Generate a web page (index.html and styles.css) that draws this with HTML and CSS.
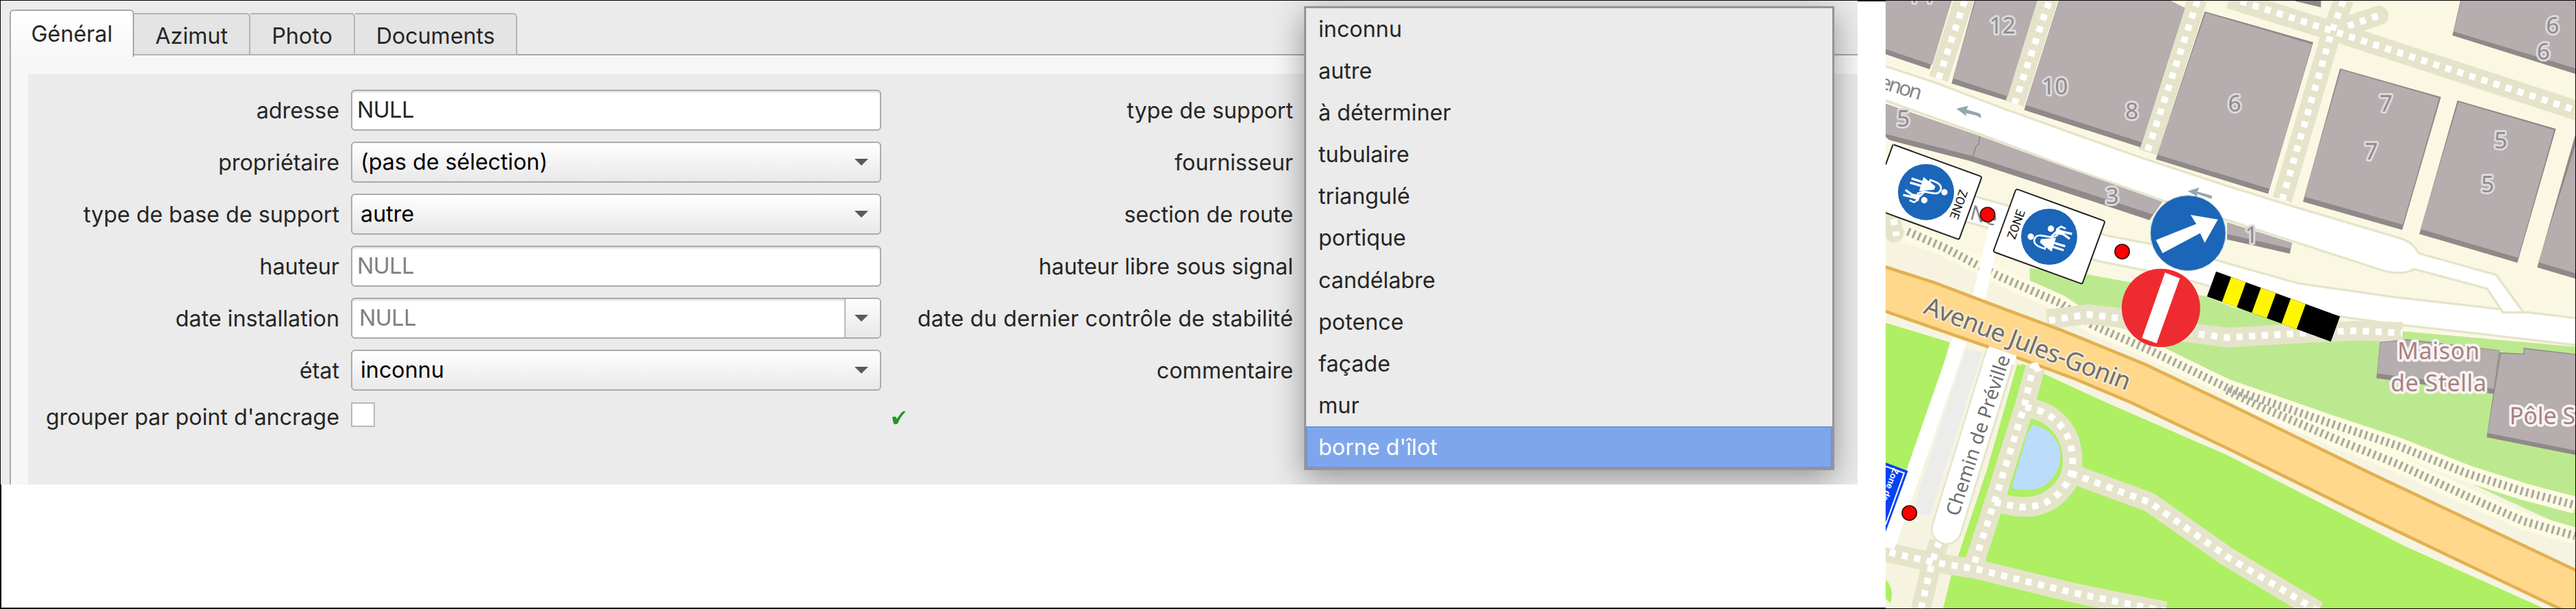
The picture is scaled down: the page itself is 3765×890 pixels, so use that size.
FILE: index.html
```html
<!DOCTYPE html>
<html lang="fr">
<head>
<meta charset="utf-8">
<title>Supports</title>
<link rel="stylesheet" href="styles.css">
</head>
<body>
<div class="page">
  <section class="panel">
    <nav class="tabs">
      <span class="tab tab-active">Général</span>
      <span class="tab tab-azimut">Azimut</span>
      <span class="tab tab-photo">Photo</span>
      <span class="tab tab-documents">Documents</span>
    </nav>
    <div class="pane">
      <div class="form">
        <label class="label">adresse</label>
        <div class="field null">NULL</div>
        <label class="label label-far">type de support</label>

        <label class="label">propriétaire</label>
        <div class="field select">(pas de sélection)<i class="caret"></i></div>
        <label class="label label-far">fournisseur</label>

        <label class="label">type de base de support</label>
        <div class="field select">autre<i class="caret"></i></div>
        <label class="label label-far">section de route</label>

        <label class="label">hauteur</label>
        <div class="field null muted">NULL</div>
        <label class="label label-far">hauteur libre sous signal</label>

        <label class="label">date installation</label>
        <div class="field null muted date">NULL<span class="date-button"><i class="caret"></i></span></div>
        <label class="label label-far label-long">date du dernier contrôle de stabilité</label>

        <label class="label">état</label>
        <div class="field select">inconnu<i class="caret"></i></div>
        <label class="label label-far">commentaire</label>

        <label class="label label-check">grouper par point d'ancrage</label>
        <div class="checkbox"></div>
        <svg class="tick" viewBox="0 0 20 19"><path d="M0 9 Q3 7 5 8 L7 11 Q12 3 16 0 L20 0 Q12 8 8 18 Q5 20 2 18 Z"/></svg>
      </div>
    </div>
    <ul class="popup">
      <li>inconnu</li>
      <li>autre</li>
      <li>à déterminer</li>
      <li>tubulaire</li>
      <li>triangulé</li>
      <li>portique</li>
      <li>candélabre</li>
      <li>potence</li>
      <li>façade</li>
      <li>mur</li>
      <li class="selected">borne d'îlot</li>
    </ul>
  </section>

  <svg class="map" viewBox="33 3 3024 2664" preserveAspectRatio="none">
    <defs>
      <g id="walkers">
        <circle cx="-27" cy="-76" r="14"/>
        <path d="M-36 -30 L-22 -30 L6 30 L-58 32 Z"/>
        <path class="limb" d="M-34 -28 L-44 0 L-56 0 Q-60 -54 -34 -57 Q-12 -58 -7 -36 L2 12 L20 34"/>
        <path class="leg" d="M-36 30 L-34 80 M-18 30 L-15 80"/>
        <circle cx="36" cy="-5" r="14"/>
        <path d="M18 18 L46 18 L46 54 L28 54 Z"/>
        <path class="limb" d="M28 20 L4 8 M42 20 L60 34 L58 56"/>
        <path class="leg" d="M33 50 L22 88 M41 50 L46 90"/>
      </g>
    </defs>

    <rect class="ground" x="33" y="3" width="3024" height="2664"/>
    <path class="verge" d="M33 1040 L440 1170 L830 1330 L1530 1600 L3057 2240 V2720 L33 1440 Z"/>
    <path class="park" d="M665 1175 L930 1205 L1440 1300 L1560 1350 L2010 1430 L2330 1455 L3057 1520 V2330 L2600 2120 L2050 1850 L1530 1660 L1000 1400 L665 1240 Z"/>
    <path class="lawn" d="M33 1415 L320 1502 L600 1580 L740 1645 L1000 1765 L1530 1995 L2310 2395 L2920 2667 H33 Z"/>
    <path class="verge" d="M320 1480 L640 1560 L470 2130 L355 2440 L320 2525 L285 2667 H33 V2375 L90 2340 Z"/>
    <path class="lawn" d="M610 1595 L660 1620 L420 2440 H350 L480 2050 Z"/>
    <path class="lawn" d="M33 2540 Q62 2570 60 2610 L55 2645 L33 2625 Z"/>

    <!-- rails -->
    <g class="rails">
      <path class="rail-bed" d="M130 1015 L300 1090 L440 1165 L540 1215 L800 1330 L940 1425 L1200 1540 L1530 1700 L1730 1768 L1980 1855 L2280 1955 L2580 2075 L2830 2155 L3057 2215"/>
      <path class="rail-bed" d="M1530 1712 L1680 1785 L2030 1935 L2280 2035 L2580 2175 L2830 2285 L3057 2350"/>
      <path class="rail" d="M130 1015 L300 1090 L440 1165 L540 1215 L800 1330 L940 1425 L1200 1540 L1530 1700 L1730 1768 L1980 1855 L2280 1955 L2580 2075 L2830 2155 L3057 2215"/>
      <path class="rail" d="M1530 1712 L1680 1785 L2030 1935 L2280 2035 L2580 2175 L2830 2285 L3057 2350"/>
    </g>

    <!-- side streets -->
    <path class="street-case" d="M400 915 L560 960 L990 1090 L1300 1150 L1530 1215 L1830 1300 L2250 1360 L2600 1400 L3070 1455"/>
    <path class="street-mid" d="M400 915 L560 960 L990 1090 L1300 1150 L1530 1215 L1830 1300 L2250 1360 L2600 1400 L3070 1455"/>
    <path class="alley" d="M515 990 L438 1320"/>
    <path class="street" d="M20 286 L250 362 L560 480 L1150 690 L1530 815 L1820 905 L2290 1045 Q2345 1060 2370 1110 L2710 1205 L2830 1370 L2740 1370 L2670 1265 L2350 1180 Q2300 1210 2210 1185 L1530 965 L1250 880 L850 740 L450 590 L20 436 Z"/>

    <!-- footpaths -->
    <g class="trail">
      <path d="M380 -10 L265 345"/><path d="M748 -10 L598 455"/><path d="M1400 -5 L1182 668"/>
      <path d="M1540 -5 L1990 135 L3070 487"/><path d="M2045 -5 L1990 135 L1772 875"/><path class="round" d="M1990 135 L2195 68"/>
      <path d="M740 1400 L920 1378 L1070 1395 L1300 1450 L1530 1480 L1880 1460 L2090 1450 L2300 1455"/>
      <path class="round" d="M50 950 L70 1020"/>
      <path d="M690 1610 L640 1785 L510 2200 L420 2475"/>
      <path d="M645 1785 Q790 1805 840 1935 Q870 2040 830 2115 Q750 2240 600 2220 L510 2202"/>
      <path d="M845 2075 L1190 2202 L1530 2440 L1930 2680"/>
      <path d="M20 2418 L240 2465 L430 2495 L860 2600 L1260 2680"/>
      <path d="M268 2375 L238 2460 L185 2680"/>
    </g>
    <g class="dots">
      <path d="M380 3 L265 345"/><path d="M748 10 L598 455"/><path d="M1400 3 L1182 660"/>
      <path d="M1590 5 L1990 135 L3070 487"/><path d="M2040 3 L1990 135 L1772 875"/><path d="M2060 114 L2200 66"/>
      <path d="M750 1405 L920 1378 L1070 1397 L1300 1450 L1530 1480 L1880 1460 L2090 1450 L2300 1460"/>
      <path d="M68 960 L80 1035"/>
      <path d="M684 1590 L640 1785 L510 2200 L420 2475"/>
      <path d="M645 1785 Q790 1805 840 1935 Q870 2040 830 2115 Q750 2240 600 2220 L510 2202"/>
      <path d="M845 2075 L1190 2202 L1530 2440 L1930 2680"/>
      <path d="M50 2422 L240 2465 L430 2495 L860 2600 L1260 2680"/>
      <path d="M268 2375 L238 2460 L185 2680"/>
    </g>
    <path class="pond" d="M680 1860 L730 1880 Q800 1930 800 2000 Q795 2075 740 2120 Q690 2165 585 2140 L640 1950 L652 1905 Z"/>

    <!-- parking and chemin -->
    <path class="lane" d="M358 1490 L40 2400"/>
    <path class="lot" d="M385 1530 L458 1545 L225 2265 L150 2240 Z"/>
    <path class="chemin-case" d="M548 1520 L300 2320"/>
    <path class="chemin" d="M548 1515 L300 2320"/>

    <!-- avenue -->
    <path class="avenue" d="M0 1160 L250 1240 L500 1335 L810 1450 L1170 1597 L1530 1768 L2170 2080 L3080 2510 V2710 L2970 2660 L2090 2240 L1530 1965 L1110 1765 L860 1660 L480 1520 L0 1354 Z"/>
    <path class="white" d="M487 1517 L608 1560 L596 1600 L470 1570 Z"/>
    <path class="white" d="M670 1590 L700 1590 L716 1625 L690 1632 Z"/>

    <!-- buildings -->
    <g class="shade">
      <path d="M33 -5 H325 L226 304 L33 238 Z"/><path d="M425 -5 H700 L560 440 L322 366 Z"/>
      <path d="M795 -5 H1265 L1345 35 L1150 646 L640 482 Z"/><path d="M1432 50 L1908 185 L1710 850 L1218 698 Z"/>
      <path d="M2025 300 L2468 425 L2298 1008 L1863 884 Z"/><path d="M2540 440 L2972 565 L2803 1152 L2373 1026 Z"/>
      <path d="M3057 590 L2890 1172 L3057 1222 Z"/><path d="M2555 -5 H3060 V325 L2518 155 Z"/><path d="M1830 -5 H1942 V32 L1830 5 Z"/>
      <path d="M33 455 L440 595 L850 745 L1245 885 L1190 965 L400 705 L33 610 Z"/><path d="M1530 975 L1815 1065 L1805 1112 L1530 1050 Z"/>
      <path d="M2200 1500 L2320 1487 L2725 1535 L2700 1727 L2185 1658 Z"/><path d="M2725 1545 L2830 1550 V1525 L3060 1552 V1995 L2668 1917 Z"/>
    </g>
    <g class="roof">
      <path d="M33 -5 H325 L237 284 L33 216 Z"/><path d="M430 -5 H700 L568 422 L327 343 Z"/>
      <path d="M797 -5 H1265 L1345 35 L1156 624 L646 460 Z"/><path d="M1436 56 L1903 194 L1716 828 L1224 678 Z"/>
      <path d="M2030 306 L2460 430 L2300 985 L1868 862 Z"/><path d="M2545 447 L2964 570 L2806 1130 L2378 1004 Z"/>
      <path d="M3057 640 L2895 1150 L3057 1198 Z"/><path d="M2558 -5 H3060 V300 L2523 138 Z"/>
      <path d="M33 455 L440 595 L850 745 L1245 885 L1205 940 L400 680 L33 588 Z"/><path d="M1530 975 L1815 1065 L1808 1090 L1530 1026 Z"/>
      <path d="M2202 1502 L2320 1492 L2722 1537 L2700 1705 L2188 1637 Z"/><path d="M2731 1550 L2834 1554 V1530 L3060 1556 V1975 L2672 1898 Z"/>
    </g>
    <path class="seam" d="M446 598 L440 635 L430 640 L413 695"/>

    <!-- one-way arrows -->
    <g class="oneway">
      <path d="M343 476 L395 464 L388 480 L448 498 L452 518 L430 506 L384 496 L388 510 Z"/>
      <path d="M1358 838 L1408 822 L1400 840 L1464 858 L1462 872 L1398 850 L1400 862 Z"/>
    </g>

    <!-- labels -->
    <g class="num">
      <text x="185" y="12">14</text>
      <text x="545" y="148">12</text><text x="775" y="415">10</text><text x="1112" y="522">8</text><text x="110" y="554">5</text>
      <text x="1027" y="893">3</text><text x="1563" y="490">6</text><text x="2227" y="490">7</text><text x="2162" y="700">7</text>
      <text x="2730" y="650">5</text><text x="2672" y="842">5</text><text x="2957" y="147">6</text><text x="2917" y="260">6</text><text x="1637" y="1064">1</text>
    </g>
    <text class="road-name" transform="translate(0 385) rotate(16.5)" textLength="190">enon</text>
    <text class="road-name" transform="translate(398 960) rotate(15)">Ne</text>
    <text class="avenue-name" transform="translate(195 1372) rotate(20.8)" textLength="958">Avenue Jules-Gonin</text>
    <text class="road-name dark" transform="translate(352 2267) rotate(-72)" textLength="735">Chemin de Préville</text>
    <text class="place" x="2277" y="1576" textLength="360">Maison</text>
    <text class="place" x="2247" y="1716" textLength="420">de Stella</text>
    <text class="place" x="2768" y="1860">Pôle S</text>

    <!-- zone signs -->
    <g class="zone">
      <rect transform="translate(65 633) rotate(20)" x="-58" width="473" height="293" rx="8"/>
      <path class="corner" d="M33 722 L62 640 L70 634 L33 600 Z"/>
      <path class="edge" d="M33 722 L65 634"/>
      <circle cx="210" cy="842" r="123"/>
      <use href="#walkers" transform="translate(210 842) rotate(110)"/>
      <text transform="translate(358 828) rotate(110)" textLength="132" lengthAdjust="spacingAndGlyphs">ZONE</text>
      <rect transform="translate(605 828) rotate(20)" width="415" height="293" rx="8"/>
      <circle cx="750" cy="1038" r="123"/>
      <use href="#walkers" transform="translate(750 1038) rotate(-70)"/>
      <text transform="translate(600 1052) rotate(-70)" textLength="132" lengthAdjust="spacingAndGlyphs">ZONE</text>
    </g>

    <!-- direction arrow, no entry, barrier -->
    <circle class="blue-disc" cx="1359" cy="1022" r="165"/>
    <path class="white" d="M1490 962 L1370 942 L1395 982 L1218 1052 L1247 1110 L1412 1022 L1432 1065 Z"/>
    <circle class="red-disc" cx="1240" cy="1350" r="172"/>
    <path class="white" d="M1258 1195 L1323 1220 L1221 1505 L1157 1482 Z"/>
    <g transform="translate(1482 1190) rotate(20)">
      <rect width="578" height="117"/>
      <path class="yellow" d="M70 0 h69 v117 h-69 Z M209 0 h70 v117 h-70 Z M348 0 h70 v117 h-70 Z"/>
    </g>

    <!-- parking zone sign -->
    <path class="pz" d="M33 2028 L131 2065 L33 2332 Z"/>
    <path class="pz-line" d="M33 2044 L114 2074 L33 2300"/>
    <text class="pz-text" transform="translate(66 2050) rotate(110)" textLength="150" lengthAdjust="spacingAndGlyphs">Zone de</text>

    <g class="pin"><circle cx="480" cy="941" r="32"/><circle cx="1070" cy="1103" r="32"/><circle cx="137" cy="2249" r="32"/></g>
  </svg>
</div>
</body>
</html>
```
FILE: styles.css
```css
* { box-sizing: border-box; }
body { margin: 0; background: #fff; }
.page {
  width: 3765px; height: 890px; padding: 1px;
  display: flex; justify-content: space-between; align-items: flex-start;
  box-shadow: inset 0 0 0 2px #000; background: #fff;
}
.panel {
  position: relative; width: 2714px; height: 707px; overflow: hidden;
  background: #ebebeb; color: #262626; padding: 13px 0 0 13px;
  font: 32.3px/40px Inter, "Liberation Sans", sans-serif;
}
.tabs { display: flex; align-items: flex-end; height: 67px; position: relative; z-index: 1; }
.tab {
  height: 62px; border: 2px solid #b4b4b4; border-width: 2px 2px 2px 0; border-radius: 0 6px 0 0;
  background: #e4e4e4; text-align: center; line-height: 64px;
}
.tab-active {
  width: 182px; height: 69px; margin-bottom: -2px; border: 2px solid #a9a9a9; border-bottom: 0;
  border-radius: 6px 6px 0 0; background: linear-gradient(#fff, #f7f7f7); line-height: 68px;
}
.tab-azimut { width: 170px; }
.tab-photo { width: 153px; }
.tab-documents { width: 237px; }
.pane {
  height: 640px; margin-top: -2px; padding: 27px 0 0 25px;
  border: solid #a9a9a9; border-width: 2px 0 0 2px; background: #f7f7f7;
}
.form {
  height: 620px; background: #ebebeb; padding-top: 23px;
  display: grid; grid-template-columns: 455px 775px 590px; column-gap: 17px;
  grid-template-rows: repeat(6, 60px) 36px; row-gap: 16.1px; align-content: start;
}
.label { text-align: right; line-height: 62px; white-space: nowrap; }
.label-far { margin-right: 5px; }
.label-long { letter-spacing: .18px; }
.label-check { line-height: 44px; }
.field {
  display: flex; align-items: center; justify-content: space-between; height: 60px; padding-left: 7px;
  border: 2px solid #ababab; border-radius: 6px; background: #fff; box-shadow: inset 0 3px 3px -1px #ddd;
}
.null { letter-spacing: -.5px; }
.select { padding: 0 17px 0 12px; color: #000; background: linear-gradient(#fff, #e8e8e8); box-shadow: none; }
.muted { color: #808080; }
.date { padding-left: 10px; }
.date-button {
  display: flex; align-items: center; width: 52px; height: 56px; padding-left: 13px;
  border-left: 2px solid #b9b9b9; border-radius: 0 4px 4px 0; background: linear-gradient(#fdfdfd, #e8e8e8);
}
.caret { border: solid transparent; border-width: 10px 10px 0; border-top-color: #5a5a5a; }
.checkbox { width: 35px; height: 36px; border: 2px solid #b9b9b9; background: #fff; }
.tick { width: 20px; height: 19px; margin: 13px 0 0 -1px; fill: #1f9a1f; }
.popup {
  position: absolute; left: 1905px; top: 8px; width: 775px; margin: 0; padding: 0; list-style: none;
  border: 3px solid #959595; background: #ebebeb; box-shadow: 0 12px 44px rgba(0, 0, 0, .38);
}
.popup li { height: 61.1px; padding-left: 18px; line-height: 62px; }
.popup .selected { background: #7ea6ec; color: #fff; line-height: 58px; border: 2px solid #7196d3; padding-left: 16px; }

.map { width: 1008px; height: 888px; font-family: "Noto Sans", sans-serif; }
.ground { fill: #faf8e3; }
.verge { fill: #f6f4e1; }
.park { fill: #bce98f; }
.lawn { fill: #aeef64; }
.pond { fill: #bbdcfb; }
.rail-bed { fill: none; stroke: #fdfbe2; stroke-width: 74; }
.rail { fill: none; stroke: #aaa9a2; stroke-width: 36; stroke-dasharray: 10 15; }
.street { fill: #fff; stroke: #e5e4cb; stroke-width: 10; }
.street-case { fill: none; stroke: #e5e4cb; stroke-width: 128; }
.street-mid { fill: none; stroke: #fff; stroke-width: 108; }
.alley { fill: none; stroke: #fff; stroke-width: 56; }
.trail { fill: none; stroke: #e5e4cb; stroke-width: 86; stroke-linejoin: round; }
.round { stroke-linecap: round; }
.dots { fill: none; stroke: #fff; stroke-width: 29; stroke-dasharray: 27 28.5; }
.lane { fill: none; stroke: #fff; stroke-width: 64; }
.lot { fill: #ececea; }
.chemin-case { fill: none; stroke: #e5e4cb; stroke-width: 138; stroke-linecap: round; }
.chemin { fill: none; stroke: #fff; stroke-width: 122; stroke-linecap: round; }
.avenue { fill: #ffd88c; stroke: #e3b050; stroke-width: 14; }
.shade { fill: #8f8989; }
.roof { fill: #b5adae; }
.seam { fill: none; stroke: #8f8989; stroke-width: 5; }
.oneway { fill: #93a8ac; }
.num { font-size: 100px; text-anchor: middle; }
.num text { fill: #8f8b8c; stroke: #dcdadb; stroke-width: 18; stroke-linejoin: round; paint-order: stroke; }
.road-name { font-size: 90px; fill: #858585; }
.dark { font-size: 84px; fill: #6e6e6e; stroke: #fff; stroke-width: 8; paint-order: stroke; }
.avenue-name { font-size: 109px; fill: #6f6f6e; stroke: #f6ead0; stroke-width: 14; stroke-linejoin: round; paint-order: stroke; }
.place { font-size: 102px; fill: #a68286; stroke: #f8f4f2; stroke-width: 22; stroke-linejoin: round; paint-order: stroke; }
.zone rect { fill: #fff; stroke: #222; stroke-width: 6; }
.zone .corner { fill: #faf8e3; }
.zone .edge { fill: none; stroke: #222; stroke-width: 6; }
.zone > circle, .blue-disc { fill: #1b66b8; }
.blue-disc { stroke: #b8c4d6; stroke-width: 3; }
.zone text { font: 54px Roboto, sans-serif; fill: #111; }
#walkers, .white { fill: #fff; }
.limb { fill: none; stroke: #fff; stroke-width: 8; }
.leg { fill: none; stroke: #fff; stroke-width: 10; }
.red-disc { fill: #ee2b30; }
.yellow { fill: #fff600; }
.pz { fill: #0541f5; }
.pz-line { fill: none; stroke: #fff; stroke-width: 6; }
.pz-text { font: bold 40px "Liberation Sans", sans-serif; fill: #fff; }
.pin { fill: #f00; stroke: #301010; stroke-width: 5; }
```
